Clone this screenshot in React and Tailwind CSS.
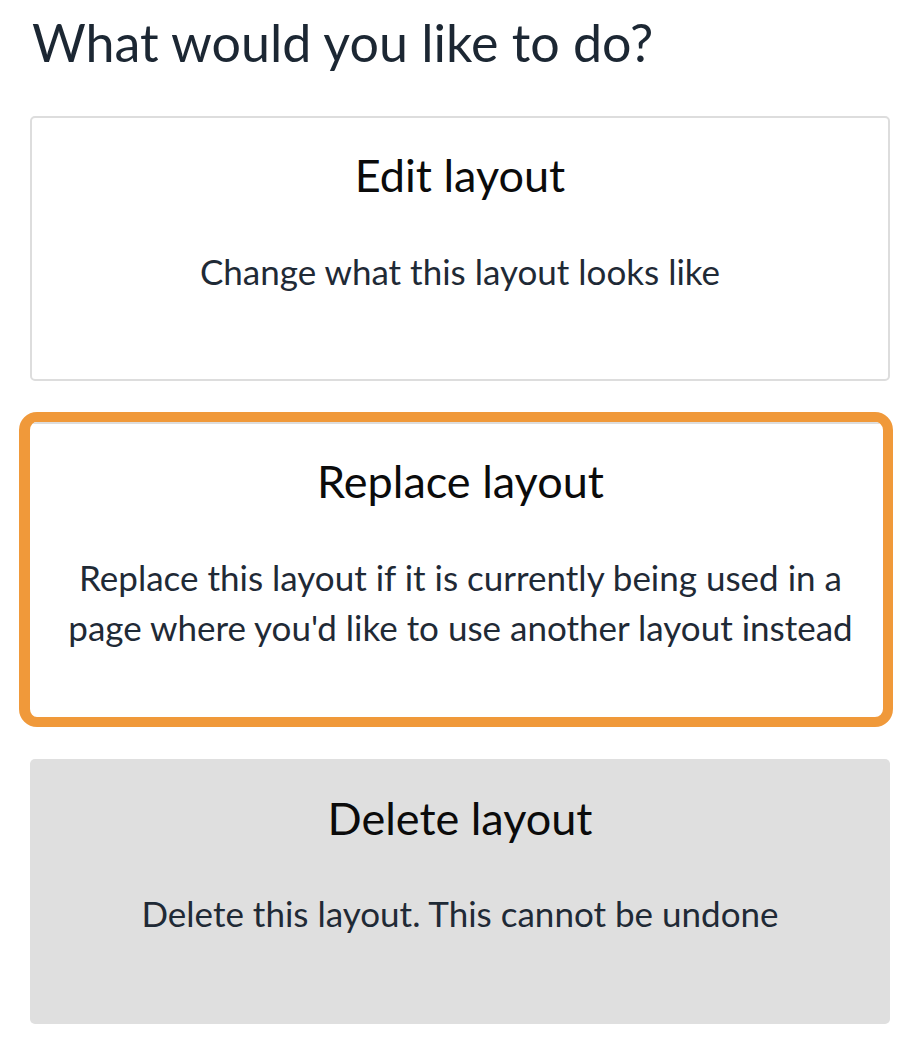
export default function App() {
  const font = { fontFamily: 'Lato, "Open Sans", sans-serif' };
  return (
    <div className="w-[916px] h-[1056px] bg-white overflow-hidden" style={font}>
      <div className="pl-[30px] pt-[12px] w-[890px] flex flex-col">
        <h1 className="pl-[2px] text-[52px] leading-[60px] font-normal text-[#1c2733]">
          What would you like to do?
        </h1>

        <div className="mt-[44px] h-[265px] border-2 border-[#dddddd] rounded-[5px] bg-white flex flex-col items-center pt-[35px]">
          <div className="text-[45px] leading-[45px] text-[#0b0b0b]">Edit layout</div>
          <div className="mt-[48px] text-[35px] leading-[50px] text-[#1f2a36] text-center">
            Change what this layout looks like
          </div>
        </div>

        <div className="mt-[31px] -ml-[11px] w-[874px] h-[315px] border-[10px] border-l-[11px] border-[#f0993a] rounded-[18px] bg-white overflow-hidden">
          <div className="h-full border-t-2 border-[#dddddd] flex flex-col items-center pt-[35px] pl-[8px]">
            <div className="text-[45px] leading-[45px] text-[#0b0b0b]">Replace layout</div>
            <div className="mt-[48px] w-[810px] text-[35px] leading-[50px] text-[#1f2a36] text-center">
              Replace this layout if it is currently being used in a page where you'd like to use another layout instead
            </div>
          </div>
        </div>

        <div className="mt-[32px] h-[265px] rounded-[5px] bg-[#dfdfdf] flex flex-col items-center pt-[37px]">
          <div className="text-[45px] leading-[45px] text-[#0b0b0b]">Delete layout</div>
          <div className="mt-[47px] text-[35px] leading-[50px] text-[#1f2a36] text-center">
            Delete this layout. This cannot be undone
          </div>
        </div>
      </div>
    </div>
  );
}
